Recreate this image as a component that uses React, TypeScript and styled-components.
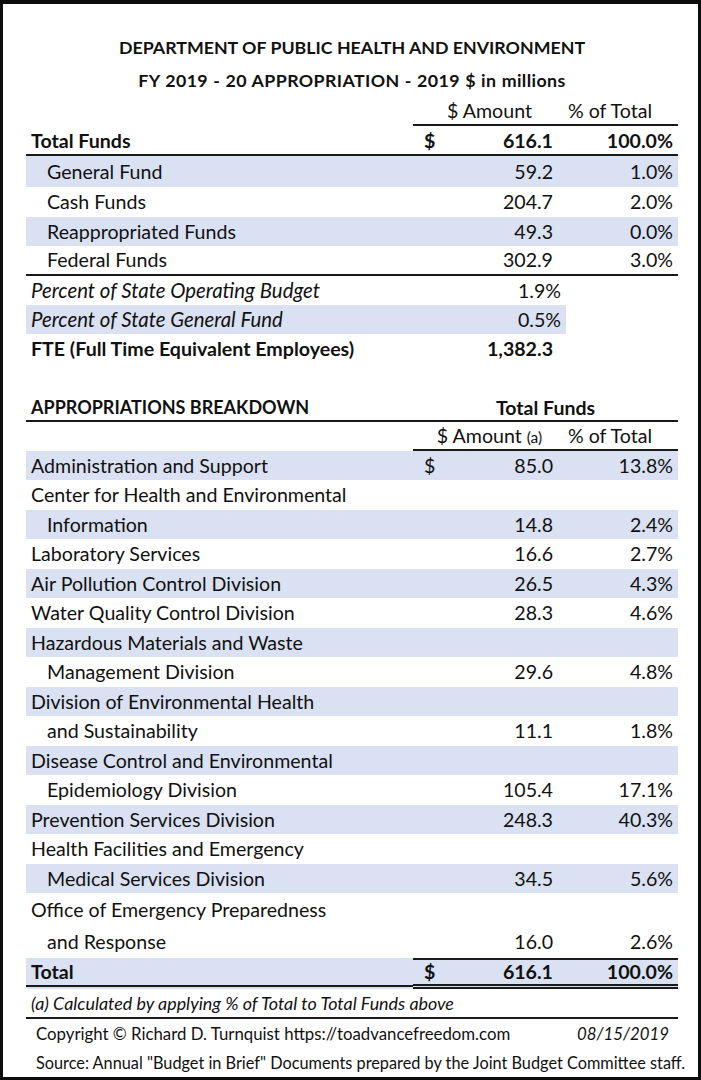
import React from "react";
import styled, { createGlobalStyle, css } from "styled-components";

const GlobalStyle = createGlobalStyle`
  html, body { margin: 0; padding: 0; background: #fff; }
  body { font-family: Lato, "Open Sans", sans-serif; color: #111; }
  * { box-sizing: border-box; }
`;

const COLS = "387px 32px 121px 112px";
const SHADE = "#d9e1f2";
const LINE = "#1a1a1a";

const Frame = styled.div`
  width: 701px;
  height: 1080px;
  border: 3px solid #0c0c0c;
  border-top-width: 4px;
  background: #fff;
  padding: 0 20px 0 23px;
  display: flex;
  flex-direction: column;
`;

const Titles = styled.div`
  display: flex;
  flex-direction: column;
  align-items: center;
  padding-top: 32px;
  gap: 10px;
  font-weight: 700;
  font-size: 17.8px;
  line-height: 23px;
  margin-bottom: 7px;
`;

const Title2 = styled.div`
  letter-spacing: 0.4px;
  word-spacing: 0.5px;
`;

const Section = styled.div`
  display: flex;
  flex-direction: column;
`;

const Row = styled.div<{
  $h?: number;
  $shade?: boolean;
  $partialShade?: boolean;
  $bold?: boolean;
  $italic?: boolean;
  $line?: boolean;
}>`
  display: grid;
  grid-template-columns: ${COLS};
  align-items: center;
  height: ${(p) => p.$h ?? 29.5}px;
  font-size: 19.6px;
  font-weight: ${(p) => (p.$bold ? 700 : 400)};
  ${(p) =>
    p.$shade &&
    css`
      background: ${SHADE};
    `}
  ${(p) =>
    p.$partialShade &&
    css`
      background: linear-gradient(to right, ${SHADE} 540px, transparent 540px);
    `}
  ${(p) =>
    p.$line &&
    css`
      border-bottom: 2px solid ${LINE};
    `}
`;

const Label = styled.div<{ $indent?: boolean; $italic?: boolean }>`
  padding-left: ${(p) => (p.$indent ? 21 : 5)}px;
  white-space: nowrap;
  ${(p) =>
    p.$italic &&
    css`
      font-style: italic;
      font-size: 20.4px;
    `}
`;

const Dollar = styled.div`
  padding-left: 11px;
`;

const Amount = styled.div<{ $pct?: boolean }>`
  text-align: right;
  padding-right: ${(p) => (p.$pct ? 5 : 13)}px;
`;

const Pct = styled.div`
  text-align: right;
  padding-right: 5px;
`;

const HeadRow = styled.div<{ $h: number; $full?: boolean }>`
  display: grid;
  grid-template-columns: ${COLS};
  height: ${(p) => p.$h}px;
  font-size: 19.6px;
  align-items: end;
  ${(p) =>
    p.$full &&
    css`
      border-bottom: 2px solid ${LINE};
    `}
`;

const HeadSpan = styled.div<{ $line?: boolean }>`
  grid-column: 2 / 5;
  display: flex;
  align-self: stretch;
  align-items: end;
  padding-bottom: 2px;
  ${(p) =>
    p.$line &&
    css`
      border-bottom: 2px solid ${LINE};
    `}
`;

const HeadAmt = styled.div`
  flex: 0 0 153px;
  text-align: center;
`;

const HeadPct = styled.div`
  flex: 0 0 88px;
  text-align: center;
`;

const Small = styled.span`
  font-size: 15.5px;
`;

const SectionTitle = styled.div`
  font-weight: 700;
  font-size: 18px;
  padding-left: 5px;
  padding-bottom: 2px;
  align-self: end;
`;

const CenterTitle = styled.div`
  grid-column: 2 / 5;
  text-align: center;
  font-weight: 700;
  font-size: 19.5px;
  padding-bottom: 1px;
`;

const TotalRow = styled.div`
  display: grid;
  grid-template-columns: ${COLS};
  height: 31px;
  font-size: 19.6px;
  font-weight: 700;
  background: ${SHADE};
`;

const TotalLabel = styled.div`
  padding-left: 5px;
  display: flex;
  align-items: center;
  border-bottom: 2px solid ${LINE};
  margin-bottom: 2px;
`;

const TotalCell = styled.div<{ $align: "left" | "right"; $pad: number }>`
  display: flex;
  align-items: center;
  justify-content: ${(p) => (p.$align === "left" ? "flex-start" : "flex-end")};
  padding-${(p) => (p.$align === "left" ? "left" : "right")}: ${(p) => p.$pad}px;
  border-top: 2px solid ${LINE};
  border-bottom: 5px double ${LINE};
  background: ${SHADE};
`;

const Footnote = styled.div`
  height: 30px;
  display: flex;
  align-items: center;
  padding-left: 5px;
  font-style: italic;
  font-size: 17.9px;
  border-bottom: 2px solid ${LINE};
`;

const FooterLine = styled.div<{ $size: number }>`
  display: flex;
  justify-content: space-between;
  align-items: center;
  height: 29px;
  padding: 0 9px 0 10px;
  font-size: ${(p) => p.$size}px;
  white-space: nowrap;
`;

const DateText = styled.span`
  font-style: italic;
`;

const Spacer = styled.div<{ $h: number }>`
  height: ${(p) => p.$h}px;
`;

type Item = {
  label: string;
  indent?: boolean;
  dollar?: boolean;
  amt?: string;
  pct?: string;
  shade?: boolean;
  h?: number;
};

const breakdown: Item[] = [
  { label: "Administration and Support", dollar: true, amt: "85.0", pct: "13.8%", shade: true },
  { label: "Center for Health and Environmental" },
  { label: "Information", indent: true, amt: "14.8", pct: "2.4%", shade: true },
  { label: "Laboratory Services", amt: "16.6", pct: "2.7%" },
  { label: "Air Pollution Control Division", amt: "26.5", pct: "4.3%", shade: true },
  { label: "Water Quality Control Division", amt: "28.3", pct: "4.6%" },
  { label: "Hazardous Materials and Waste", shade: true },
  { label: "Management Division", indent: true, amt: "29.6", pct: "4.8%" },
  { label: "Division of Environmental Health", shade: true },
  { label: "and Sustainability", indent: true, amt: "11.1", pct: "1.8%" },
  { label: "Disease Control and Environmental", shade: true },
  { label: "Epidemiology Division", indent: true, amt: "105.4", pct: "17.1%" },
  { label: "Prevention Services Division", amt: "248.3", pct: "40.3%", shade: true },
  { label: "Health Facilities and Emergency" },
  { label: "Medical Services Division", indent: true, amt: "34.5", pct: "5.6%", shade: true },
  { label: "Office of Emergency Preparedness", h: 33 },
  { label: "and Response", indent: true, amt: "16.0", pct: "2.6%", h: 31.5 },
];

export default function App() {
  return (
    <>
      <GlobalStyle />
      <Frame>
        <Titles>
          <div>DEPARTMENT OF PUBLIC HEALTH AND ENVIRONMENT</div>
          <Title2>FY 2019 - 20 APPROPRIATION - 2019 $ in millions</Title2>
        </Titles>
        <Section>
          <HeadRow $h={27}>
            <div />
            <HeadSpan $line>
              <HeadAmt>$ Amount</HeadAmt>
              <HeadPct>% of Total</HeadPct>
            </HeadSpan>
          </HeadRow>
          <Row $bold $line $h={30}>
            <Label>Total Funds</Label>
            <Dollar>$</Dollar>
            <Amount>616.1</Amount>
            <Pct>100.0%</Pct>
          </Row>
          <Row $shade $h={30.5}>
            <Label $indent>General Fund</Label>
            <div />
            <Amount>59.2</Amount>
            <Pct>1.0%</Pct>
          </Row>
          <Row $h={30}>
            <Label $indent>Cash Funds</Label>
            <div />
            <Amount>204.7</Amount>
            <Pct>2.0%</Pct>
          </Row>
          <Row $shade $h={29}>
            <Label $indent>Reappropriated Funds</Label>
            <div />
            <Amount>49.3</Amount>
            <Pct>0.0%</Pct>
          </Row>
          <Row $line $h={30}>
            <Label $indent>Federal Funds</Label>
            <div />
            <Amount>302.9</Amount>
            <Pct>3.0%</Pct>
          </Row>
          <Row $h={29}>
            <Label $italic>Percent of State Operating Budget</Label>
            <div />
            <Amount $pct>1.9%</Amount>
          </Row>
          <Row $partialShade $h={29}>
            <Label $italic>Percent of State General Fund</Label>
            <div />
            <Amount $pct>0.5%</Amount>
          </Row>
          <Row $bold $h={30}>
            <Label>FTE (Full Time Equivalent Employees)</Label>
            <div />
            <Amount>1,382.3</Amount>
          </Row>
        </Section>
        <Spacer $h={28} />
        <Section>
          <HeadRow $h={30} $full>
            <SectionTitle>APPROPRIATIONS BREAKDOWN</SectionTitle>
            <CenterTitle>Total Funds</CenterTitle>
          </HeadRow>
          <HeadRow $h={29}>
            <div />
            <HeadSpan $line>
              <HeadAmt>
                $ Amount <Small>(a)</Small>
              </HeadAmt>
              <HeadPct>% of Total</HeadPct>
            </HeadSpan>
          </HeadRow>
          {breakdown.map((r) => (
            <Row key={r.label} $shade={r.shade} $h={r.h}>
              <Label $indent={r.indent}>{r.label}</Label>
              <Dollar>{r.dollar ? "$" : ""}</Dollar>
              <Amount>{r.amt ?? ""}</Amount>
              <Pct>{r.pct ?? ""}</Pct>
            </Row>
          ))}
          <TotalRow>
            <TotalLabel>Total</TotalLabel>
            <TotalCell $align="left" $pad={11}>$</TotalCell>
            <TotalCell $align="right" $pad={13}>616.1</TotalCell>
            <TotalCell $align="right" $pad={5}>100.0%</TotalCell>
          </TotalRow>
          <Footnote>(a) Calculated by applying % of Total to Total Funds above</Footnote>
          <FooterLine $size={16.8}>
            <span>Copyright © Richard D. Turnquist https://toadvancefreedom.com</span>
            <DateText>08/15/2019</DateText>
          </FooterLine>
          <FooterLine $size={16.3}>
            <span>Source: Annual "Budget in Brief" Documents prepared by the Joint Budget Committee staff.</span>
          </FooterLine>
        </Section>
      </Frame>
    </>
  );
}
